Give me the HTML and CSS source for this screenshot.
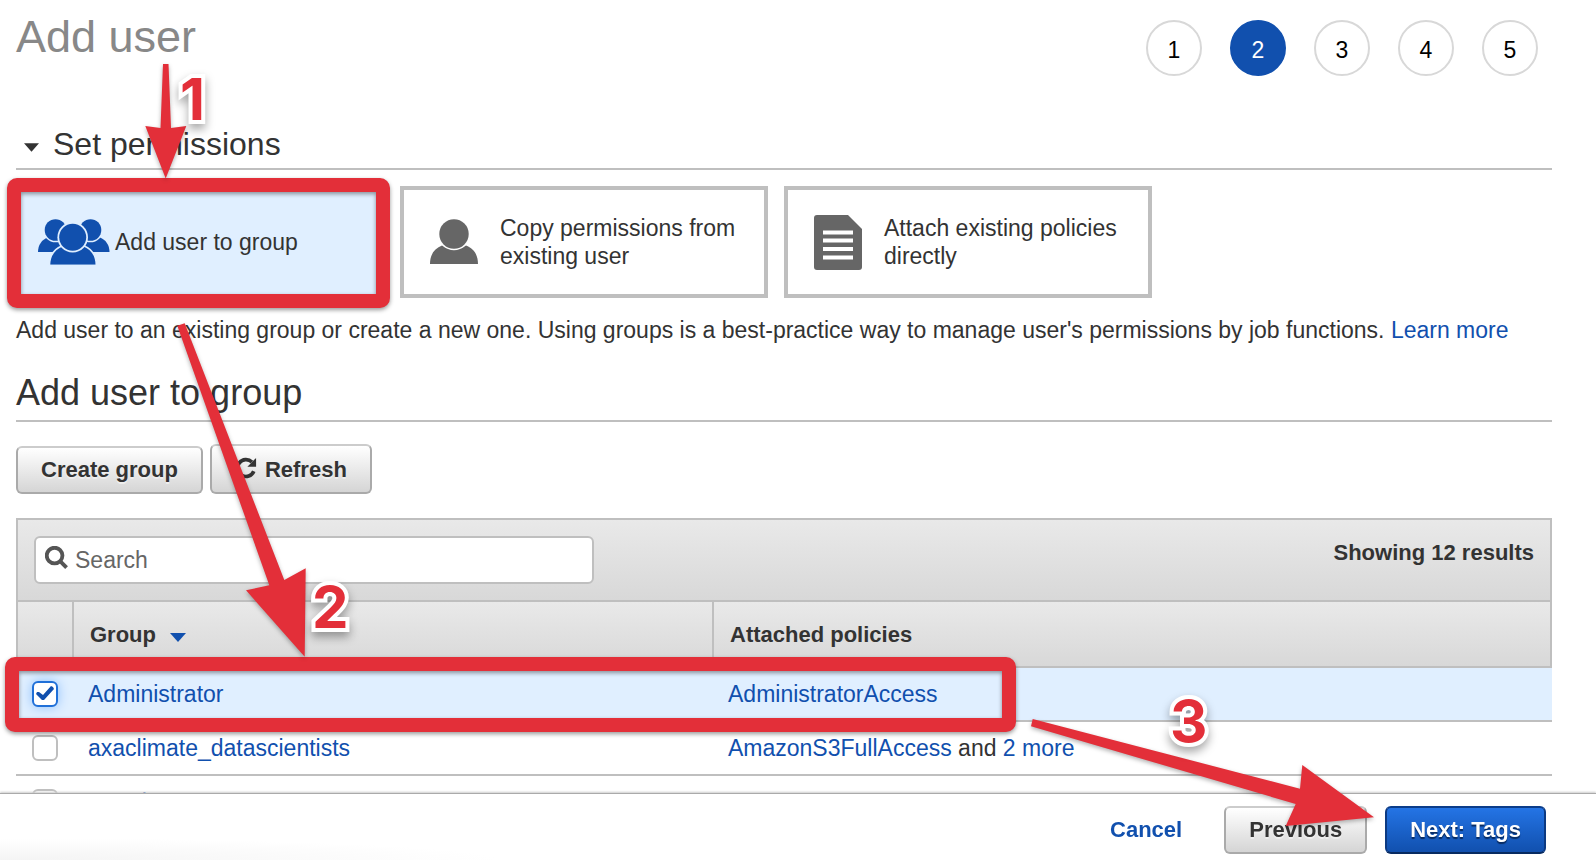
FILE: index.html
```html
<!DOCTYPE html>
<html lang="en">
<head>
<meta charset="utf-8">
<title>Add user</title>
<link rel="stylesheet" href="styles.css">
</head>
<body>
<main class="page">
  <header class="page-head">
    <h1 class="title">Add user</h1>
    <ol class="steps">
      <li class="step">1</li>
      <li class="step step-current" aria-current="step">2</li>
      <li class="step">3</li>
      <li class="step">4</li>
      <li class="step">5</li>
    </ol>
  </header>

  <section>
    <h2 class="section-title">
      <svg class="caret" viewBox="0 0 16 9" aria-hidden="true"><path d="M0 0h16L8 9z"/></svg>
      Set permissions
    </h2>
    <div class="cards">
      <button type="button" class="card card-selected" aria-pressed="true">
        <svg class="icon-group" viewBox="0 0 72 46" aria-hidden="true">
          <g class="blue">
            <path d="M0 33C0 26 4 20.500 9.500 18.500H30V33z"/>
            <path d="M71.500 33C71.500 26 67.500 20.500 62 18.500H42V33z"/>
          </g>
          <g class="knockout">
            <circle cx="17.500" cy="11" r="12.300"/>
            <circle cx="52.500" cy="11" r="12.300"/>
          </g>
          <g class="blue">
            <circle cx="17.500" cy="11" r="10.800"/>
            <circle cx="52.500" cy="11" r="10.800"/>
          </g>
          <path class="front" d="M12.300 45.700C12.300 37 17 30.500 24.500 27.500h21C53 30.500 57.500 37 57.500 45.700z"/>
          <circle class="knockout" cx="34.700" cy="18.300" r="15.300"/>
          <circle class="blue" cx="34.700" cy="18.300" r="13.500"/>
          <path class="knockout" d="M0 46h72v-.300H0z"/>
        </svg>
        Add user to group
      </button>
      <button type="button" class="card">
        <svg class="icon-user" viewBox="0 0 48 46" aria-hidden="true">
          <path d="M0 45C0 35 5 29 12 26.500Q24 36 36 26.500C43 29 48 35 48 45z"/><circle cx="24" cy="15" r="14.700"/>
        </svg>
        Copy permissions from existing user
      </button>
      <button type="button" class="card">
        <svg class="icon-doc" viewBox="0 0 48 55" aria-hidden="true">
          <path d="M3 0H34L48 14V52a3 3 0 0 1-3 3H3a3 3 0 0 1-3-3V3a3 3 0 0 1 3-3z"/>
          <path class="doc-lines" d="M9 17.500h30M9 25.500h30M9 34h30M9 42.500h30"/>
        </svg>
        Attach existing policies directly
      </button>
    </div>
    <p class="intro">Add user to an existing group or create a new one. Using groups is a best-practice way to manage user's permissions by job functions. <a href="#">Learn more</a></p>
  </section>

  <section>
    <h2 class="sub-title">Add user to group</h2>
    <div class="actions">
      <button type="button" class="btn">Create group</button>
      <button type="button" class="btn btn-tall">
        <svg class="icon-refresh" viewBox="0 0 24 24" aria-hidden="true"><path d="M20.500 15.500A9.200 9.200 0 1 1 18.500 5.500" fill="none" stroke="#333" stroke-width="4"/><path d="M23 1v9.500h-9.500z" fill="#333"/></svg>
        Refresh
      </button>
    </div>
    <div class="toolbar">
      <label class="search">
        <svg class="icon-search" viewBox="0 0 24 24" aria-hidden="true"><circle cx="10" cy="10" r="8.200"/><path d="M16 16l6.500 6.500"/></svg>
        <input type="search" class="search-input" placeholder="Search" aria-label="Search">
      </label>
      <span class="count">Showing 12 results</span>
    </div>
    <table class="groups">
      <colgroup><col class="col-check"><col class="col-name"><col></colgroup>
      <thead>
        <tr>
          <th></th>
          <th scope="col">Group <svg class="sort" viewBox="0 0 16 9" aria-hidden="true"><path d="M0 0h16L8 9z"/></svg></th>
          <th scope="col">Attached policies</th>
        </tr>
      </thead>
      <tbody>
        <tr class="row-selected">
          <td><input type="checkbox" class="check" aria-label="Administrator" checked></td>
          <td><a href="#">Administrator</a></td>
          <td><a href="#">AdministratorAccess</a></td>
        </tr>
        <tr>
          <td><input type="checkbox" class="check" aria-label="axaclimate_datascientists"></td>
          <td><a href="#">axaclimate_datascientists</a></td>
          <td><a href="#">AmazonS3FullAccess</a> and <a href="#">2 more</a></td>
        </tr>
        <tr>
          <td><input type="checkbox" class="check" aria-label="Developers"></td>
          <td><a href="#">Developers</a></td>
          <td></td>
        </tr>
      </tbody>
    </table>
  </section>
</main>

<footer class="footer">
  <a href="#" class="cancel">Cancel</a>
  <button type="button" class="btn">Previous</button>
  <button type="button" class="btn btn-primary">Next: Tags</button>
</footer>

<svg class="annotations" width="1400" height="860" viewBox="0 0 1400 860">
  <g class="marks">
    <rect x="14" y="185" width="369" height="116" rx="3"/>
    <rect x="12" y="664" width="997" height="61" rx="3"/>
  </g>
  <g class="arrows">
    <path d="M163 64h5.500L171 128l15.300-2-20.600 52.500L145.300 126l15.200 2z"/>
    <path d="M177.300 325.700l7.400-2.400L284.300 580l21.400-11.700-1 88.400L246 590.300l23.300-5z"/>
    <path d="M1032.700 719L1300 788.700l2.300-23.700L1374 817.300l-88.300 8.700 10-22L1031 726.300z"/>
  </g>
  <g class="numbers">
    <text x="180" y="120">1</text>
    <text x="312" y="628">2</text>
    <text x="1170" y="742">3</text>
  </g>
</svg>
</body>
</html>
```
FILE: styles.css
```css
* { box-sizing: border-box; }

html, body { height: 100%; }

body {
  margin: 0;
  overflow: hidden;
  background: #fff;
  color: #333;
  font-family: "Liberation Sans", Arial, sans-serif;
  font-size: 23px;
  line-height: 28px;
}

a { color: #1150ae; text-decoration: none; }

button, input { font: inherit; color: inherit; }

.page { padding: 0 44px 0 16px; }

.page-head {
  display: flex;
  justify-content: space-between;
  align-items: flex-start;
  padding: 8px 14px 0 0;
}

.title {
  margin: 0;
  color: #888;
  font-size: 45px;
  font-weight: 400;
  line-height: 58px;
}

.steps {
  display: flex;
  gap: 28px;
  margin: 12px 0 0;
  padding: 0;
  list-style: none;
}

.step {
  width: 56px;
  height: 56px;
  padding-top: 2px;
  border: 2px solid #d8d8d8;
  border-radius: 50%;
  color: #000;
  line-height: 52px;
  text-align: center;
}

.step-current {
  border-color: #1150ae;
  background: #1150ae;
  color: #fff;
}

.section-title, .sub-title {
  margin: 0;
  border-bottom: 2px solid #bfbfbf;
  font-weight: 400;
}

.section-title {
  display: flex;
  align-items: center;
  gap: 14px;
  margin-top: 48px;
  padding: 0 0 4px 8px;
  font-size: 32px;
  line-height: 40px;
}

.caret { width: 15px; height: 9px; margin-top: 7px; fill: #333; }

.cards { display: flex; gap: 16px; margin-top: 16px; }

.card {
  display: flex;
  flex: 0 1 368px;
  align-items: center;
  gap: 22px;
  height: 112px;
  padding: 0 20px 0 26px;
  border: 4px solid #bfbfbf;
  background: #fff;
  text-align: left;
}

.card-selected {
  gap: 5px;
  padding-left: 18px;
  border-color: #1150ae;
  background: #e0efff;
}

.card svg { flex: none; fill: #666; }
.icon-group { width: 72px; height: 46px; }
.card .blue { fill: #1150ae; }
.card .knockout { fill: #e0efff; }
.card .front { fill: #1150ae; stroke: #e0efff; stroke-width: 3; paint-order: stroke; }
.icon-user { width: 48px; height: 46px; }
.icon-doc { width: 48px; height: 55px; }
.doc-lines { stroke: #fff; stroke-width: 4; }

.intro { margin: 18px 0 0; }

.sub-title {
  margin-top: 27px;
  padding-bottom: 5px;
  font-size: 36px;
  line-height: 44px;
}

.actions {
  display: flex;
  align-items: flex-end;
  gap: 7px;
  margin-top: 22px;
}

.btn {
  display: flex;
  align-items: center;
  gap: 8px;
  height: 48px;
  padding: 0 23px;
  border: 2px solid #aaa;
  border-top-color: #ccc;
  border-radius: 6px;
  background: linear-gradient(#fff, #d5d5d5);
  font-size: 22px;
  font-weight: 700;
  text-shadow: 0 2px 0 #eee;
}

.btn-tall { height: 50px; padding-top: 2px; }

.btn-primary {
  border-color: #0b3d8a #0c3a82 #082a60;
  background: linear-gradient(#2474e5, #1150ae);
  color: #fff;
  text-shadow: 0 2px 1px #072b61;
}

.icon-refresh { width: 22px; height: 22px; margin-bottom: 4px; }

.toolbar {
  display: flex;
  justify-content: space-between;
  align-items: flex-start;
  gap: 16px;
  margin-top: 24px;
  padding: 16px;
  border: 2px solid #bfbfbf;
  border-bottom: 0;
  background: linear-gradient(#e9e9e9, #d8d8d8);
}

.search {
  display: flex;
  flex: 0 1 560px;
  align-items: center;
  gap: 7px;
  height: 48px;
  padding: 0 9px;
  border: 2px solid #bfbfbf;
  border-radius: 6px;
  background: #fff;
}

.icon-search {
  flex: none;
  width: 23px;
  height: 23px;
  margin-bottom: 6px;
  fill: none;
  stroke: #555;
  stroke-width: 4;
}

.search-input {
  flex: 1;
  min-width: 0;
  padding: 0;
  border: 0;
  outline: 0;
  background: none;
}

.search-input::placeholder { color: #666; opacity: 1; }

.count { margin-top: 3px; font-size: 22px; font-weight: 700; }

.groups {
  width: 100%;
  border-spacing: 0;
  table-layout: fixed;
}

.col-check { width: 56px; }
.col-name { width: 640px; }

.groups th {
  height: 68px;
  padding: 2px 16px 0;
  border: 2px solid #bfbfbf;
  border-right-width: 0;
  background: linear-gradient(#e9e9e9, #d8d8d8);
  font-size: 22px;
  text-align: left;
}

.groups th:last-child { border-right-width: 2px; }

.sort { width: 16px; height: 9px; margin-left: 8px; fill: #1150ae; }

.groups td {
  height: 54px;
  padding: 0 16px;
  border-bottom: 2px solid #bfbfbf;
  white-space: nowrap;
}

.row-selected td { background: #e0efff; }

.check {
  display: block;
  width: 26px;
  height: 26px;
  margin: 0;
  appearance: none;
  border: 2px solid #bfbfbf;
  border-radius: 6px;
  background: #fff;
}

.check:checked {
  border-color: #2070d8;
  background: #fff;
  box-shadow: 0 0 12px #8fc0fa;
}

.check:checked::after {
  content: "";
  display: block;
  width: 18px;
  height: 15px;
  margin: 3px 0 0 2px;
  background: #1150ae;
  clip-path: polygon(0 8px, 1px 6px, 3px 6px, 7px 9px, 15px 0, 17px 1px, 18px 3px, 8px 14px, 6px 14px);
}

.footer {
  position: fixed;
  right: 0;
  bottom: 0;
  left: 0;
  display: flex;
  justify-content: flex-end;
  align-items: center;
  gap: 18px;
  padding: 12px 50px 6px 16px;
  border-top: 1px solid #aaa;
  background: radial-gradient(500px 22px at 0 100%, #f4f4f4, #fff);
  box-shadow: 0 -1px 2px #ccc;
}

.cancel { margin-right: 24px; font-size: 22px; font-weight: 700; }

.annotations {
  position: absolute;
  top: 0;
  left: 0;
  pointer-events: none;
}

.marks {
  fill: none;
  stroke: #e32f39;
  stroke-width: 14;
  filter: drop-shadow(0 2px 2px rgba(0, 0, 0, .4));
}

.arrows {
  fill: #e32f39;
  filter: drop-shadow(0 2px 2px rgba(0, 0, 0, .3));
}

.numbers {
  fill: #e32f39;
  stroke: #fff;
  stroke-width: 8;
  paint-order: stroke;
  font-family: Inter, sans-serif;
  font-size: 58px;
  font-weight: 700;
  filter: drop-shadow(0 5px 5px rgba(0, 0, 0, .35));
}
```
